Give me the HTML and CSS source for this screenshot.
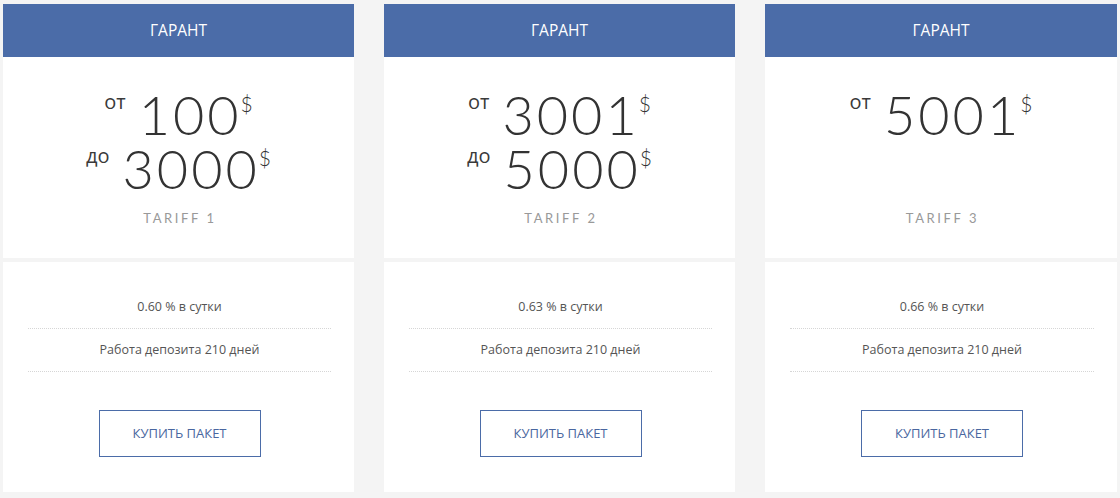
FILE: index.html
```html
<!DOCTYPE html>
<html lang="ru">
<head>
<meta charset="utf-8">
<title>Тарифы</title>
<link rel="stylesheet" href="styles.css">
</head>
<body>
<div class="plans">
  <div class="plan">
    <div class="plan-head">ГАРАНТ</div>
    <div class="plan-top">
      <div class="price">
        <div class="price-line"><span class="pre">от</span><span class="num">100</span><span class="cur">$</span></div>
        <div class="price-line"><span class="pre">до</span><span class="num">3000</span><span class="cur">$</span></div>
      </div>
      <div class="tariff">TARIFF 1</div>
    </div>
    <div class="plan-bottom">
      <div class="row">0.60 % в сутки</div>
      <div class="row">Работа депозита 210 дней</div>
      <a class="buy" href="#">КУПИТЬ ПАКЕТ</a>
    </div>
  </div>
  <div class="plan">
    <div class="plan-head">ГАРАНТ</div>
    <div class="plan-top">
      <div class="price">
        <div class="price-line"><span class="pre">от</span><span class="num">3001</span><span class="cur">$</span></div>
        <div class="price-line"><span class="pre">до</span><span class="num">5000</span><span class="cur">$</span></div>
      </div>
      <div class="tariff">TARIFF 2</div>
    </div>
    <div class="plan-bottom">
      <div class="row">0.63 % в сутки</div>
      <div class="row">Работа депозита 210 дней</div>
      <a class="buy" href="#">КУПИТЬ ПАКЕТ</a>
    </div>
  </div>
  <div class="plan plan-wide">
    <div class="plan-head">ГАРАНТ</div>
    <div class="plan-top">
      <div class="price">
        <div class="price-line"><span class="pre">от</span><span class="num">5001</span><span class="cur">$</span></div>
      </div>
      <div class="tariff">TARIFF 3</div>
    </div>
    <div class="plan-bottom">
      <div class="row">0.66 % в сутки</div>
      <div class="row">Работа депозита 210 дней</div>
      <a class="buy" href="#">КУПИТЬ ПАКЕТ</a>
    </div>
  </div>
</div>
</body>
</html>
```
FILE: styles.css
```css
html, body {
  margin: 0;
  padding: 0;
  background: #f4f4f4;
}
body {
  padding: 4px 0 0 3px;
  font-family: "Open Sans", "Liberation Sans", sans-serif;
  color: #555;
}
.plans {
  display: flex;
  gap: 30px;
  align-items: flex-start;
}
.plan {
  width: 351px;
  display: flex;
  flex-direction: column;
  gap: 4px;
}
.plan-wide {
  width: 352px;
}
.plan-head {
  background: #4b6ca8;
  color: #fff;
  height: 53px;
  line-height: 53px;
  text-align: center;
  font-size: 15.5px;
  margin-bottom: -4px;
}
.plan-top {
  background: #fff;
  padding: 31px 0 32px;
  text-align: center;
}
.price {
  height: 108px;
  display: flex;
  flex-direction: column;
  align-items: center;
}
.price-line {
  display: flex;
  align-items: flex-start;
  height: 54px;
  color: #333;
  font-family: "Lato", "Liberation Sans", sans-serif;
}
.num {
  font-size: 54px;
  line-height: 50px;
  margin-top: 2px;
  font-weight: 300;
  letter-spacing: 3px;
}
.pre {
  font-family: "Open Sans", "Liberation Sans", sans-serif;
  font-size: 20px;
  line-height: 20px;
  margin-top: 4px;
  margin-right: 13px;
  font-weight: 400;
  color: #3a3a3a;
}
.cur {
  font-size: 21px;
  line-height: 20px;
  margin-top: 6px;
  margin-left: -1px;
  font-weight: 300;
}
.tariff {
  margin-top: 14px;
  font-family: "Lato", "Liberation Sans", sans-serif;
  font-size: 13px;
  line-height: 16px;
  letter-spacing: 2.6px;
  color: #999;
  padding-left: 3px;
}
.plan-bottom {
  background: #fff;
  padding: 24px 23px 35px 25px;
  display: flex;
  flex-direction: column;
  align-items: center;
}
.row {
  align-self: stretch;
  text-align: center;
  font-size: 12.5px;
  line-height: 20px;
  padding: 11px 0;
  border-bottom: 1px dotted #d6d6d6;
  color: #555;
}
.buy {
  margin-top: 38px;
  width: 160px;
  height: 45px;
  border: 1px solid #4b6ca8;
  color: #4a67a0;
  font-size: 13px;
  line-height: 45px;
  text-align: center;
  text-decoration: none;
}
```
